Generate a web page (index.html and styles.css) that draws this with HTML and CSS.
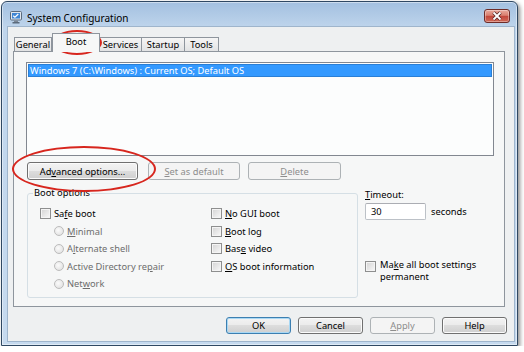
FILE: index.html
```html
<!DOCTYPE html>
<html lang="en">
<head>
<title>System Configuration</title>
<link rel="stylesheet" href="styles.css">
</head>

<body>
<div class="window">
  <div class="titlebar">
    <svg class="app-icon" width="13" height="13" viewBox="0 0 13 13">
      <rect x="0.5" y="0.5" width="11" height="8.5" rx="1" fill="#dfe6ee" stroke="#5b6b7d"/>
      <rect x="2" y="2" width="8" height="5.5" fill="#3f86d4"/>
      <path d="M3.2 4.8 L4.9 6.2 L8.3 3" fill="none" stroke="#fff" stroke-width="1.2"/>
      <rect x="4" y="9.5" width="4" height="1.5" fill="#7c8795"/>
      <rect x="2.5" y="11" width="7" height="1.5" fill="#5b6b7d"/>
    </svg>
    <span class="title">System Configuration</span>
    <div class="close">
      <svg width="12" height="10" viewBox="0 0 12 10">
        <path d="M2.5 1.5 L9.5 8.5 M9.5 1.5 L2.5 8.5" stroke="#5b2a28" stroke-width="3.4"/>
        <path d="M2.5 1.5 L9.5 8.5 M9.5 1.5 L2.5 8.5" stroke="#fff" stroke-width="1.8"/>
      </svg>
    </div>
  </div>

  <div class="client">
    <div class="tabs">
      <span class="tab w-general">General</span>
      <span class="tab selected w-boot">Boot</span>
      <span class="tab w-services">Services</span>
      <span class="tab w-startup">Startup</span>
      <span class="tab w-tools">Tools</span>
    </div>

    <div class="panel">
      <div class="listbox">
        <div class="item selected">Windows 7 (C:\Windows) : Current OS; Default OS</div>
      </div>

      <div class="list-buttons">
        <span class="btn w-advanced"><span>Ad<u>v</u>anced options...</span></span>
        <span class="btn disabled w-default"><span><u>S</u>et as default</span></span>
        <span class="btn disabled w-delete"><span><u>D</u>elete</span></span>
      </div>

      <div class="options">
        <div class="group">
          <div class="group-title">Boot options</div>
          <div class="group-cols">
            <div class="col-left">
              <div class="opt"><span class="check"></span><span>Sa<u>f</u>e boot</span></div>
              <div class="opt sub"><span class="radio"></span><span><u>M</u>inimal</span></div>
              <div class="opt sub"><span class="radio"></span><span>A<u>l</u>ternate shell</span></div>
              <div class="opt sub"><span class="radio"></span><span>Active Directory re<u>p</u>air</span></div>
              <div class="opt sub"><span class="radio"></span><span>Net<u>w</u>ork</span></div>
            </div>
            <div class="col-right">
              <div class="opt"><span class="check"></span><span><u>N</u>o GUI boot</span></div>
              <div class="opt"><span class="check"></span><span><u>B</u>oot log</span></div>
              <div class="opt"><span class="check"></span><span>Bas<u>e</u> video</span></div>
              <div class="opt"><span class="check"></span><span><u>O</u>S boot information</span></div>
            </div>
          </div>
        </div>

        <div class="side">
          <div class="label"><u>T</u>imeout:</div>
          <div class="timeout-row">
            <span class="textbox">30</span>
            <span>seconds</span>
          </div>
          <div class="permanent">
            <span class="check"></span>
            <span class="permanent-text">Ma<u>k</u>e all boot settings<br>permanent</span>
          </div>
        </div>
      </div>
    </div>

    <div class="dialog-buttons">
      <span class="btn default">OK</span>
      <span class="btn">Cancel</span>
      <span class="btn disabled"><span><u>A</u>pply</span></span>
      <span class="btn">Help</span>
    </div>
  </div>

  <!-- red annotation rings drawn over the dialog -->
  <div class="mark mark-tab"></div>
  <div class="mark mark-advanced"></div>
</div>
</body>
</html>
```

FILE: styles.css
```css
* {box-sizing: border-box;}

body {
  margin: 0;
  background: #ffffff;
  font-family: "Segoe UI", "Noto Sans", sans-serif;
  font-size: 9.3px;
  color: #000;
}

u {text-decoration: underline; text-underline-offset: 1px;}

/* window frame */
.window {
  position: relative;
  margin: 1px 0 0 1px;
  width: 517px;
  height: 345px;
  padding: 0 3px 4px 6px;
  border: 1px solid #2f4863;
  border-radius: 6px 6px 0 0;
  background: linear-gradient(#a3c0e0, #bfd5ec 26px, #c6daef);
  box-shadow: 2px 2px 4px rgba(0, 0, 0, 0.45), inset 0 0 0 1px rgba(255, 255, 255, 0.45);
}

.titlebar {
  display: flex;
  align-items: flex-start;
  height: 25px;
}
.app-icon {margin: 9px 0 0 2px;}
.title {
  margin: 9px 0 0 4px;
  font-size: 10px;
  line-height: 14px;
}
.close {
  display: flex;
  align-items: center;
  justify-content: center;
  margin: 7px 4px 0 auto;
  width: 26px;
  height: 14px;
  border: 1px solid #6e2c28;
  border-radius: 3px;
  background: linear-gradient(#e9a99c, #d9806f 45%, #c2463a 50%, #d06a58);
  box-shadow: inset 0 0 0 1px rgba(255, 255, 255, 0.35);
}

/* dialog body */
.client {
  display: flex;
  flex-direction: column;
  height: 314px;
  padding: 6px 0 0 5px;
  background: #eef0f1;
  box-shadow: 0 0 0 1px #9fb5cc;
}

.tabs {
  display: flex;
  align-items: flex-end;
  height: 18px;
  padding-left: 1px;
}
.tab {
  display: flex;
  justify-content: center;
  align-items: center;
  height: 14px;
  border: 1px solid #8e959d;
  border-bottom: none;
  border-left: none;
  background: linear-gradient(#f5f5f5, #e2e3e4);
  line-height: 12px;
}
.tab:first-child {border-left: 1px solid #8e959d;}
.tab.selected {
  position: relative;
  z-index: 1;
  height: 19px;
  margin-bottom: -1px;
  border-left: 1px solid #8e959d;
  background: #f6f7f7;
  padding-bottom: 3px;
}
.w-general {width: 38px;}
.w-boot {width: 48px;}
.w-services {width: 42px;}
.w-startup {width: 43px;}
.w-tools {width: 34px;}

.panel {
  width: 492px;
  height: 256px;
  border: 1px solid #8e959d;
  background: #f6f7f7;
}

.listbox {
  margin: 10px 0 0 12px;
  width: 468px;
  height: 94px;
  padding: 1px;
  border: 1px solid #828790;
  background: #fcfdfd;
}
.item {
  height: 13px;
  padding-left: 2px;
  line-height: 13px;
  white-space: nowrap;
}
.item.selected {
  background: #3399ff;
  color: #fff;
  box-shadow: inset 0 0 0 1px #2a7fd6;
}

/* push buttons */
.btn {
  display: flex;
  justify-content: center;
  align-items: center;
  height: 18px;
  border: 1px solid #707070;
  border-radius: 3px;
  background: linear-gradient(#f3f3f3, #ebebeb 50%, #dddddd 50%, #cfcfcf);
  box-shadow: inset 0 0 0 1px #fbfbfb;
  white-space: nowrap;
}
.btn.disabled {
  border-color: #adb2b5;
  background: #f4f4f4;
  box-shadow: none;
  color: #8d8d8d;
}
.btn.default {
  border-color: #3c7fb1;
  box-shadow: inset 0 0 0 1px #a9d8f4;
}

.list-buttons {
  display: flex;
  margin: 6px 0 0 13px;
}
.w-advanced {width: 111px;}
.w-default {width: 92px; margin-left: 10px;}
.w-delete {width: 93px; margin-left: 8px;}

.options {display: flex;}

.group {
  margin: 13px 0 0 13px;
  width: 331px;
  height: 105px;
  border: 1px solid #d5dfe5;
  border-radius: 3px;
}
.group-title {
  width: fit-content;
  margin: -7px 0 0 5px;
  padding: 0 1px;
  line-height: 12px;
  background: #f6f7f7;
}
.group-cols {
  display: flex;
  margin-top: 6px;
  padding-left: 12px;
}
.col-left {width: 171px;}

.opt {
  display: flex;
  align-items: center;
  height: 17.5px;
  white-space: nowrap;
}
.opt.sub {
  padding-left: 14px;
  color: #6d6d6d;
}

.check {
  flex: none;
  width: 11px;
  height: 11px;
  margin-right: 3px;
  border: 1px solid #8e8f8f;
  background: linear-gradient(135deg, #d3d3d3, #f9f9f9);
  box-shadow: inset 0 0 0 1px #f4f4f4;
}
.radio {
  flex: none;
  width: 10px;
  height: 10px;
  margin-right: 3px;
  border: 1px solid #bcbcbc;
  border-radius: 50%;
  background: radial-gradient(circle at 40% 40%, #fbfbfb, #dcdcdc);
}

.side {
  margin: 9px 0 0 7px;
}
.label {line-height: 12px;}
.timeout-row {
  display: flex;
  align-items: center;
  gap: 5px;
  margin-top: 2px;
}
.textbox {
  display: flex;
  align-items: center;
  width: 61px;
  height: 17px;
  padding-left: 5px;
  border: 1px solid #bcc1c7;
  border-top-color: #abadb3;
  border-radius: 2px;
  background: #fff;
}
.permanent {
  display: flex;
  align-items: flex-start;
  margin-top: 39px;
}
.permanent .check {margin-top: 2px; margin-right: 4px;}
.permanent-text {line-height: 12px;}

.dialog-buttons {
  display: flex;
  justify-content: flex-end;
  gap: 7px;
  margin-top: 10px;
  padding-right: 7px;
}
.dialog-buttons .btn {width: 65px; height: 17px;}

/* annotation rings */
.mark {
  position: absolute;
  border: 2px solid #d7261e;
  border-radius: 50%;
}
.mark-tab {
  left: 50px;
  top: 28px;
  width: 50px;
  height: 25px;
}
.mark-advanced {
  left: 10px;
  top: 144px;
  width: 144px;
  height: 46px;
}
```
